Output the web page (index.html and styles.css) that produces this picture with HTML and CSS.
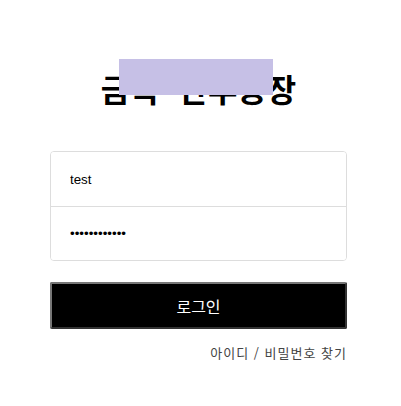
FILE: index.html
```html
<!DOCTYPE html>
<html lang="ko">
<head>
    <meta charset="UTF-8">
    <title>로그인</title>
    <link rel="stylesheet" href="styles.css">
</head>
<body>
<div class="login">
    <h1 class="title">금속 단추공장<span class="title-cover"></span></h1>

    <form class="login-form" onsubmit="return false">
        <div class="fields">
            <input class="field" type="text" value="test">
            <input class="field" type="password" value="123456789012">
        </div>
        <button class="login-button" type="submit">로그인</button>
    </form>

    <div class="find-link">
        <a href="#">아이디 / 비밀번호 찾기</a>
    </div>
</div>
</body>
</html>
```

FILE: styles.css
```css
body {
    margin: 0;
    background: #fff;
    font-family: 'Noto Sans CJK KR', 'Noto Sans', sans-serif;
}

.login {
    width: 297px;
    margin-left: 50px;
}

.title {
    position: relative;
    margin: 68px 0 0;
    font-size: 32px;
    line-height: 40px;
    font-weight: bold;
    text-align: center;
    word-spacing: 10px;
    color: #000;
}

/* 제목 위에 덮인 박스 */
.title-cover {
    position: absolute;
    left: 69px;
    top: -9px;
    width: 154px;
    height: 36px;
    background: #c6c0e6;
}

.login-form {
    margin-top: 43px;
}

.fields {
    border: 1px solid #ddd;
    border-radius: 4px;
    overflow: hidden;
}

.field {
    display: block;
    width: 100%;
    height: 54px;
    box-sizing: border-box;
    margin: 0;
    padding: 0 19px;
    border: none;
    outline: none;
    font-family: 'Liberation Sans', Arial, sans-serif;
    font-size: 13.3333px;
    color: #000;
    background: #fff;
}

.field + .field {
    border-top: 1px solid #ddd;
}

.login-button {
    display: block;
    width: 100%;
    height: 47px;
    margin-top: 21px;
    background: #000;
    color: #fff;
    border: 2px solid;
    border-color: #777 #333 #333 #777;
    border-radius: 2px;
    font-family: 'Noto Sans CJK KR', sans-serif;
    font-size: 16px;
    cursor: pointer;
}

.find-link {
    margin-top: 15px;
    text-align: right;
    font-size: 13px;
    line-height: 18px;
}

.find-link a {
    color: #444;
    text-decoration: none;
    letter-spacing: 1px;
}
```
